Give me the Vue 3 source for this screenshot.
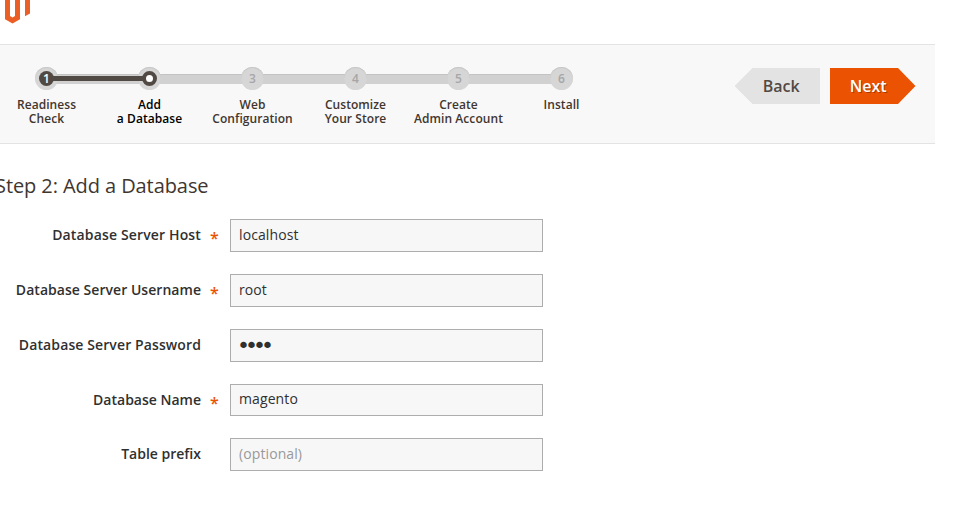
<script setup>
import { ref } from 'vue'

const steps = [
  { num: 1, lines: ['Readiness', 'Check'], state: 'done' },
  { num: 2, lines: ['Add', 'a Database'], state: 'active' },
  { num: 3, lines: ['Web', 'Configuration'], state: 'todo' },
  { num: 4, lines: ['Customize', 'Your Store'], state: 'todo' },
  { num: 5, lines: ['Create', 'Admin Account'], state: 'todo' },
  { num: 6, lines: ['Install'], state: 'todo' },
]

const fields = ref([
  { id: 'host', label: 'Database Server Host', required: true, type: 'text', value: 'localhost' },
  { id: 'user', label: 'Database Server Username', required: true, type: 'text', value: 'root' },
  { id: 'password', label: 'Database Server Password', required: false, type: 'password', value: 'root' },
  { id: 'name', label: 'Database Name', required: true, type: 'text', value: 'magento' },
  { id: 'prefix', label: 'Table prefix', required: false, type: 'text', value: '', placeholder: '(optional)' },
])
</script>

<template>
  <div class="page">
    <header class="brand">
      <svg class="logo" width="36" height="24" viewBox="0 0 36 24">
        <path fill="#eb5f26" d="M5 0h5v16l2.500 1.500L15 16V0h5v19.200l-7.500 4.300L5 19.200z" />
        <path fill="#eb5f26" d="M25 0h5v13.500l-5 2.800z" />
      </svg>
    </header>

    <nav class="wizard">
      <ol class="steps">
        <li v-for="step in steps" :key="step.num" class="step" :class="step.state">
          <span class="marker"><span class="disc"><template v-if="step.state !== 'active'">{{ step.num }}</template></span></span>
          <span class="caption"><span v-for="line in step.lines" :key="line">{{ line }}</span></span>
        </li>
      </ol>
      <div class="actions">
        <button type="button" class="btn back">Back</button>
        <button type="button" class="btn next">Next</button>
      </div>
    </nav>

    <main class="content">
      <h1 class="title">Step 2: Add a Database</h1>
      <form class="form" @submit.prevent>
        <div v-for="field in fields" :key="field.id" class="field" :class="field.id">
          <label class="label" :for="field.id">{{ field.label }}</label>
          <span class="star"><template v-if="field.required">*</template></span>
          <input :id="field.id" v-model="field.value" class="input" :type="field.type" :placeholder="field.placeholder" />
        </div>
      </form>
    </main>
  </div>
</template>

<style>
body {
  background: #fff;
  overflow: hidden;
}
</style>

<style scoped>
.page {
  width: 972px;
  height: 524px;
  overflow: hidden;
  font-family: "Open Sans", "Noto Sans", sans-serif;
  color: #41362f;
}
.brand {
  height: 44px;
}
.logo {
  display: block;
}
.wizard {
  box-sizing: border-box;
  width: 935px;
  height: 100px;
  display: flex;
  justify-content: space-between;
  padding-right: 19.500px;
  background: #f8f8f8;
  border-top: 1px solid #e3e3e3;
  border-bottom: 1px solid #e3e3e3;
}
.steps {
  display: flex;
  list-style: none;
  margin: 0 0 0 -5px;
  padding: 22px 0 0;
}
.step {
  position: relative;
  width: 103px;
  display: flex;
  flex-direction: column;
  align-items: center;
}
.step:not(:last-child)::before {
  content: "";
  position: absolute;
  top: 7px;
  left: 51px;
  width: 103px;
  height: 10px;
  box-sizing: border-box;
  background: #d1d1d1;
  border-top: 1px solid #c3c3c3;
}
.step.done::after {
  content: "";
  position: absolute;
  z-index: 2;
  top: 9px;
  left: 55px;
  width: 94px;
  height: 5px;
  background: #514943;
}
.marker {
  position: relative;
  z-index: 1;
  box-sizing: border-box;
  width: 23px;
  height: 23px;
  display: flex;
  align-items: center;
  justify-content: center;
  border-radius: 50%;
  background: #d6d6d6;
  box-shadow: inset 0 1px 1px #c6c6c6;
}
.disc {
  font-size: 12px;
  line-height: 15px;
  font-weight: 600;
  color: #a6a6a6;
}
.done .disc,
.active .disc {
  box-sizing: border-box;
  width: 15px;
  height: 15px;
  border-radius: 50%;
  background: #514943;
  color: #fff;
  text-align: center;
}
.active .disc {
  background: #fff;
  border: 4px solid #514943;
}
.caption {
  display: flex;
  flex-direction: column;
  align-items: center;
  margin: 8px 0 0;
  font-size: 12px;
  line-height: 14px;
  font-weight: 600;
  letter-spacing: 0.06px;
  white-space: nowrap;
}
.active .caption {
  color: #000;
}
.actions {
  display: flex;
  gap: 10px;
  padding-top: 23px;
}
.btn {
  height: 36px;
  margin: 0;
  border: 0;
  font-family: inherit;
  font-size: 16px;
  font-weight: 600;
  line-height: 36px;
}
.back {
  width: 85.500px;
  padding: 0 0 0 8px;
  background: #e3e3e3;
  color: #514943;
  clip-path: polygon(0 50%, 18px 0, 100% 0, 100% 100%, 18px 100%);
}
.next {
  width: 85.500px;
  padding: 0 9px 0 0;
  background: #eb5202;
  color: #fff;
  text-shadow: 1px 1px 0 rgba(0, 0, 0, 0.3);
  clip-path: polygon(0 0, 68px 0, 100% 50%, 68px 100%, 0 100%);
}
.title {
  margin: 0 0 0 -5px;
  padding-top: 28px;
  font-size: 20px;
  line-height: 28px;
  font-weight: 400;
  letter-spacing: -0.08px;
}
.form {
  display: flex;
  flex-direction: column;
  gap: 22px;
  padding-top: 19px;
}
.field {
  display: flex;
  height: 33px;
}
.field.name {
  height: 32px;
}
.label {
  width: 201px;
  text-align: right;
  font-size: 14px;
  line-height: 32px;
  font-weight: 600;
  color: #303030;
}
.host .label {
  letter-spacing: 0.15px;
}
.user .label {
  letter-spacing: 0.04px;
}
.password .label {
  letter-spacing: 0.11px;
}
.star {
  width: 29px;
  box-sizing: border-box;
  padding-left: 9px;
  font-size: 16px;
  line-height: 38px;
  font-weight: 600;
  color: #eb5202;
}
.input {
  box-sizing: border-box;
  width: 313px;
  height: 100%;
  margin: 0;
  padding: 0 8px 2px;
  border: 1px solid #adadad;
  border-radius: 0;
  outline: 0;
  background: #f7f7f7;
  font-family: inherit;
  font-size: 14px;
  letter-spacing: 0.1px;
  color: #303030;
}
.name .input {
  padding-bottom: 3px;
}
.password .input {
  padding: 0 6px;
  font-family: "DejaVu Sans", sans-serif;
  font-size: 22px;
  letter-spacing: -5px;
}
.input::placeholder {
  color: #999;
  opacity: 1;
}
</style>
